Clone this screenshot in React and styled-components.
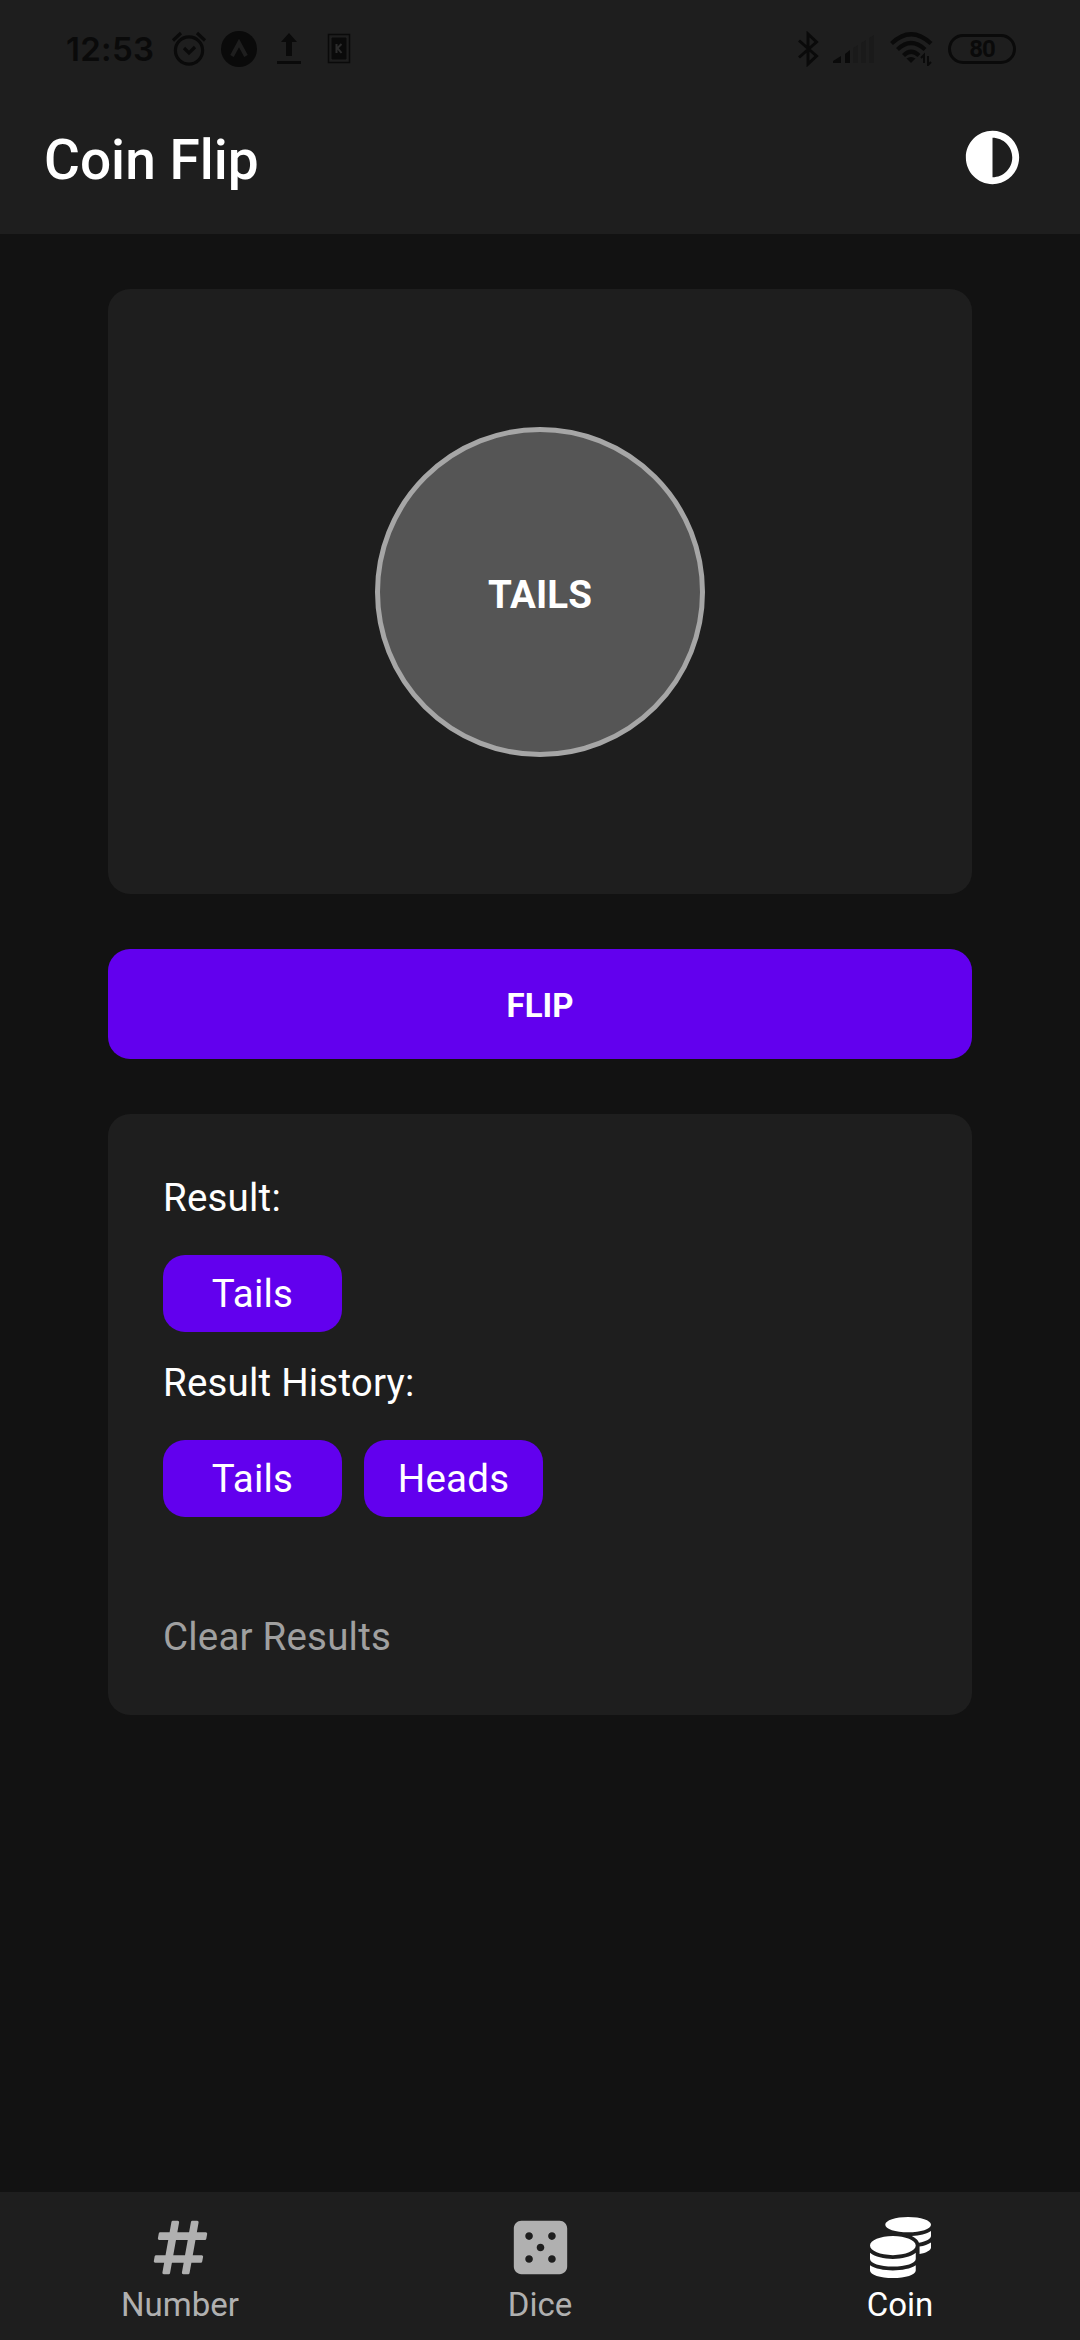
import React from "react";
import styled, { createGlobalStyle } from "styled-components";
import { FaAdjust, FaCoins, FaDiceFive, FaHashtag } from "react-icons/fa";

const GlobalStyle = createGlobalStyle`
  * { box-sizing: border-box; }
  body { margin: 0; background: #121212; }
  button { font: inherit; border: 0; padding: 0; background: none; }
`;

const Screen = styled.div`
  display: flex;
  flex-direction: column;
  width: 1080px;
  height: 2340px;
  overflow: hidden;
  background: #121212;
  color: #fff;
  font-family: Roboto, "Noto Sans", sans-serif;
`;

const StatusBar = styled.div`
  display: flex;
  justify-content: space-between;
  height: 80px;
  padding: 27px 64px 0 66px;
  background: #1e1e1e;
  color: #0a0a0a;
`;

const StatusGroup = styled.div`
  display: flex;
  align-items: center;
  height: 44px;
  gap: 14px;
`;

const StatusIcon = styled.span`
  display: flex;
  align-items: center;
  justify-content: center;
  width: 36px;
  height: 36px;
`;

const Clock = styled.span`
  width: 91px;
  font-family: Inter, sans-serif;
  font-size: 33px;
  font-weight: 600;
  letter-spacing: 0.3px;
  line-height: 44px;
  white-space: nowrap;
`;

const Battery = styled.div`
  width: 68px;
  height: 30px;
  border: 3px solid #0a0a0a;
  border-radius: 15px;
  font-size: 24px;
  font-weight: 700;
  letter-spacing: -1px;
  line-height: 25px;
  text-align: center;
`;

const Header = styled.header`
  display: flex;
  justify-content: space-between;
  align-items: center;
  height: 154px;
  padding: 0 60px 0 44px;
  background: #1e1e1e;
`;

const Title = styled.h1`
  margin: 5px 0 0;
  font-size: 55px;
  font-weight: 500;
  line-height: 64px;
`;

const ThemeButton = styled.button`
  display: flex;
  color: #fff;
`;

const Main = styled.main`
  flex: 1;
  display: flex;
  flex-direction: column;
  gap: 55px;
  padding: 55px 108px;
`;

const Card = styled.section`
  display: flex;
  flex-direction: column;
  height: ${(p) => p.$height}px;
  padding: 55px;
  border-radius: 22px;
  background: #1e1e1e;
`;

const CoinStage = styled(Card)`
  align-items: center;
  justify-content: center;
`;

const CoinFace = styled.div`
  display: flex;
  align-items: center;
  justify-content: center;
  width: 330px;
  height: 330px;
  padding-top: 6px;
  border: 5.5px solid #a6a6a6;
  border-radius: 50%;
  background: #555;
  font-size: 38.5px;
  font-weight: 700;
  letter-spacing: 0.1px;
`;

const FlipButton = styled.button`
  height: 110px;
  padding-top: 2px;
  border-radius: 22px;
  background: #6200ee;
  color: #fff;
  && { font-size: 33px; font-weight: 700; }
`;

const Label = styled.h2`
  margin: 6px 0 35px;
  font-size: 38.5px;
  font-weight: 400;
  letter-spacing: 0.2px;
  line-height: 45px;
`;

const ResultRow = styled.div`
  display: flex;
  gap: 22px;
  margin-bottom: 22px;
`;

const Result = styled.div`
  width: 179px;
  height: 77px;
  border-radius: 22px;
  background: #6200ee;
  font-size: 38.5px;
  letter-spacing: 0.2px;
  line-height: 77px;
  text-align: center;
`;

const ClearButton = styled.button`
  align-self: flex-start;
  margin-top: 75px;
  color: #a0a0a0;
  && { font-size: 38.5px; line-height: 45px; letter-spacing: 0.2px; }
`;

const TabBar = styled.nav`
  display: grid;
  grid-template-columns: repeat(3, 1fr);
  height: 148px;
  background: #1e1e1e;
`;

const Tab = styled.button`
  display: flex;
  flex-direction: column;
  align-items: center;
  gap: 7px;
  padding-top: 25px;
  color: ${(p) => (p.$active ? "#fff" : "#b0b0b0")};
  && { font-size: 33px; line-height: 39px; }
`;

const AlarmIcon = () => (
  <svg width="36" height="36" viewBox="0 0 36 36" fill="none" stroke="currentColor" strokeWidth="3.2">
    <circle cx="18" cy="19.5" r="13.6" />
    <path d="M2 9.5 10 2M26 2l8 7.5M13 17l5 5 6-6" />
  </svg>
);

const ExpoIcon = () => (
  <svg width="36" height="36" viewBox="0 0 36 36">
    <circle cx="18" cy="18" r="18" fill="currentColor" />
    <path d="M11 25 18 12l7 13" fill="none" stroke="#1e1e1e" strokeWidth="4" />
  </svg>
);

const UploadIcon = () => (
  <svg width="26" height="32" viewBox="0 0 26 32" fill="currentColor">
    <path d="M13 0 21 9h-5v14h-6V9H5zM1 28h24v3H1z" />
  </svg>
);

const CardIcon = () => (
  <svg width="24" height="32" viewBox="0 0 24 32" fill="none" stroke="currentColor">
    <path d="M1.5 1.5h21v28h-21z" strokeWidth="1.5" />
    <path d="M5 5h14v21H5z" fill="currentColor" />
    <path d="M9.5 11v9M14.5 11l-4 4 4 5" stroke="#2c2c2c" strokeWidth="2" />
  </svg>
);

const BluetoothIcon = () => (
  <svg width="22" height="36" viewBox="0 0 22 36" fill="none" stroke="currentColor" strokeWidth="3">
    <path d="M2 9.5 19.5 25 11 33V3l8.500 8L2 26.500" />
  </svg>
);

const SignalIcon = () => (
  <svg width="43" height="30" viewBox="0 0 43 30" fill="currentColor">
    <path d="M0 29v-2l8-5v7zM12 29V20l5-4v13z" />
    <path d="M20 29V14l5-3v18zM28 29V9l5-3v23zM36 29V4l5-3v28z" opacity=".2" />
  </svg>
);

const WifiIcon = () => (
  <svg width="44" height="34" viewBox="0 0 44 34" fill="none" stroke="currentColor" strokeWidth="4.200">
    <path d="M1.500 11.500Q21 -7 41 11.500M7.500 17.500Q21 4.500 35 17.500M13.500 23.500Q21 16 29 23.500" />
    <path d="M16.500 26.500q4.500-3 9 0L21 31z" fill="currentColor" stroke="none" />
    <path d="M34 31v-8l-3 3M38 24v9l3-3" strokeWidth="2" />
  </svg>
);

const notificationIcons = [AlarmIcon, ExpoIcon, UploadIcon, CardIcon];

const tabs = [
  { name: "Number", Icon: FaHashtag },
  { name: "Dice", Icon: FaDiceFive },
  { name: "Coin", Icon: FaCoins },
];

const latest = "Tails";
const history = ["Tails", "Heads"];

export default function App() {
  return (
    <Screen>
      <GlobalStyle />
      <StatusBar>
        <StatusGroup>
          <Clock>12:53</Clock>
          {notificationIcons.map((Icon, i) => (
            <StatusIcon key={i}>
              <Icon />
            </StatusIcon>
          ))}
        </StatusGroup>
        <StatusGroup>
          <BluetoothIcon />
          <SignalIcon />
          <WifiIcon />
          <Battery>80</Battery>
        </StatusGroup>
      </StatusBar>
      <Header>
        <Title>Coin Flip</Title>
        <ThemeButton aria-label="Toggle theme">
          <FaAdjust size={55} />
        </ThemeButton>
      </Header>
      <Main>
        <CoinStage $height={605}>
          <CoinFace>{latest.toUpperCase()}</CoinFace>
        </CoinStage>
        <FlipButton>FLIP</FlipButton>
        <Card $height={601}>
          <Label>Result:</Label>
          <ResultRow>
            <Result>{latest}</Result>
          </ResultRow>
          <Label>Result History:</Label>
          <ResultRow>
            {history.map((side, i) => (
              <Result key={i}>{side}</Result>
            ))}
          </ResultRow>
          <ClearButton>Clear Results</ClearButton>
        </Card>
      </Main>
      <TabBar>
        {tabs.map(({ name, Icon }) => (
          <Tab key={name} $active={name === "Coin"}>
            <Icon size={61} />
            {name}
          </Tab>
        ))}
      </TabBar>
    </Screen>
  );
}
